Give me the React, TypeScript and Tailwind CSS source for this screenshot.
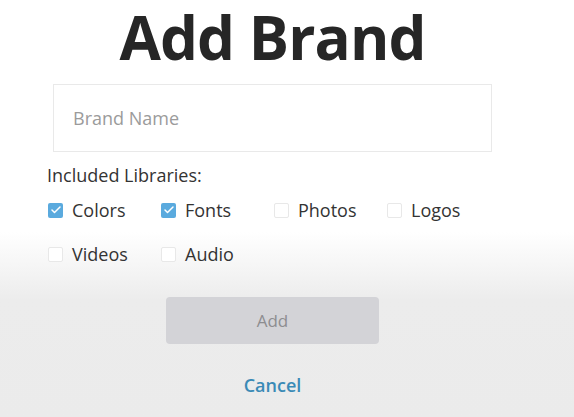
import { Check } from "lucide-react";

const libraries = [
  { name: "Colors", checked: true },
  { name: "Fonts", checked: true },
  { name: "Photos", checked: false },
  { name: "Logos", checked: false },
  { name: "Videos", checked: false },
  { name: "Audio", checked: false },
];

function Box({ checked }: { checked: boolean }) {
  if (checked) {
    return (
      <span className="flex h-[15px] w-[15px] items-center justify-center rounded-[2px] bg-[#5aaade]">
        <Check size={12} strokeWidth={3} className="text-white" />
      </span>
    );
  }
  return <span className="h-[15px] w-[15px] rounded-[2px] border border-[#e8e8e8] bg-white" />;
}

export default function App() {
  return (
    <div className="h-[417px] w-[574px] overflow-hidden bg-[linear-gradient(to_bottom,#ffffff_0px,#ffffff_232px,#ececec_300px,#ebebeb_100%)] font-['Open_Sans',sans-serif]">
      <div className="ml-[47px] flex w-[451px] flex-col">
        <h1 className="text-center text-[60px] font-bold leading-[74px] tracking-[-0.015em] text-[#262626]">
          Add Brand
        </h1>

        <div className="mx-[6px] mt-[10px] flex h-[68px] items-center border border-[#e9e9e9] bg-white px-[19px]">
          <span className="text-[18px] text-[#9b9b9b]">Brand Name</span>
        </div>

        <p className="mt-[11px] text-[18px] leading-[24px] text-[#333]">Included Libraries:</p>

        <div className="mt-[11px] grid grid-cols-[113px_113px_113px_113px] gap-y-[20px]">
          {libraries.map((lib) => (
            <label key={lib.name} className="flex h-[24px] items-center gap-[9px] pl-[1px]">
              <Box checked={lib.checked} />
              <span className="text-[18px] leading-[24px] text-[#333]">{lib.name}</span>
            </label>
          ))}
        </div>

        <button
          type="button"
          disabled
          className="mx-auto mt-[31px] h-[47px] w-[213px] rounded-[4px] bg-[#d3d3d7] text-[17px] text-[#8d8d90]"
        >
          Add
        </button>

        <p className="mt-[29px] text-center text-[18px] font-semibold leading-[24px] text-[#3a8ab6]">Cancel</p>
      </div>
    </div>
  );
}
